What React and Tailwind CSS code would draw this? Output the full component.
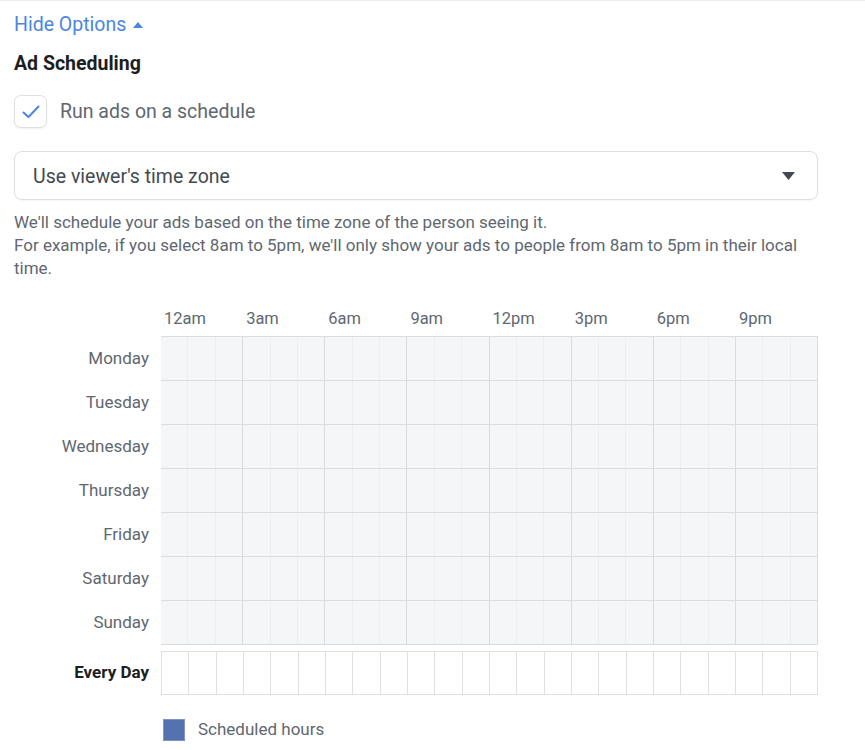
import React, { useState } from "react";

const days = ["Monday", "Tuesday", "Wednesday", "Thursday", "Friday", "Saturday", "Sunday"];
const hourLabels = ["12am", "3am", "6am", "9am", "12pm", "3pm", "6pm", "9pm"];
const hours = Array.from({ length: 24 }, (_, i) => i);

function ScheduleRow({ day }) {
  return (
    <div className="flex h-[44px]">
      <div className="w-[147px] shrink-0 pr-[12px] flex items-center justify-end text-[17px] text-[#606770]">
        {day}
      </div>
      <div className="grid grid-cols-24 w-[657px] border-b border-[#d9dbde]">
        {hours.map((h) => (
          <div
            key={h}
            className={
              h % 3 === 2
                ? "border-r border-[#d9dbde] bg-[#f5f6f7]"
                : "border-r border-[#eceef0] bg-[#f5f6f7]"
            }
          />
        ))}
      </div>
    </div>
  );
}

export default function App() {
  const [onSchedule, setOnSchedule] = useState(true);

  return (
    <div className="w-[865px] h-[750px] bg-white border-t border-[#ececec] px-[14px] pt-[12px] font-['Roboto',sans-serif] overflow-hidden">
      <button className="flex items-center gap-[7px] h-[24px] text-[19.5px] text-[#4b86e0]">
        Hide Options
        <svg width="10" height="6" viewBox="0 0 10 6">
          <path d="M0 6 L5 0 L10 6 Z" fill="#4b86e0" />
        </svg>
      </button>

      <h3 className="mt-[15px] h-[24px] leading-[24px] text-[19.5px] font-bold text-[#1c1e21]">Ad Scheduling</h3>

      <label className="mt-[19px] flex items-center gap-[13px] cursor-pointer">
        <span
          className="w-[33px] h-[33px] rounded-[7px] border border-[#dddfe2] bg-white flex items-center justify-center shadow-[0_1px_2px_rgba(0,0,0,0.06)]"
          onClick={() => setOnSchedule((v) => !v)}
        >
          {onSchedule && (
            <svg width="18" height="14" viewBox="0 0 18 14">
              <path d="M1.5 7.5 L6.5 12 L16.5 1.5" fill="none" stroke="#4b86e0" strokeWidth="2" strokeLinecap="round" strokeLinejoin="round" />
            </svg>
          )}
        </span>
        <span className="text-[19.5px] text-[#606770]">Run ads on a schedule</span>
      </label>

      <div className="mt-[23px] w-[804px] h-[49px] rounded-[8px] border border-[#dddfe2] flex items-center justify-between pl-[18px] pr-[22px] shadow-[0_1px_2px_rgba(0,0,0,0.04)]">
        <span className="text-[19.5px] text-[#444950] translate-y-[1px]">Use viewer's time zone</span>
        <svg width="13" height="8" viewBox="0 0 13 8">
          <path d="M0 0 L13 0 L6.5 8 Z" fill="#444950" />
        </svg>
      </div>

      <p className="mt-[11px] w-[804px] text-[17px] leading-[23px] text-[#606770]">
        We'll schedule your ads based on the time zone of the person seeing it.
        <br />
        For example, if you select 8am to 5pm, we'll only show your ads to people from 8am to 5pm in their local time.
      </p>

      <div className="mt-[29px] flex h-[20px]">
        <div className="w-[147px] shrink-0" />
        <div className="grid grid-cols-8 w-[657px]">
          {hourLabels.map((l) => (
            <div key={l} className="pl-[3px] text-[16.5px] leading-[20px] text-[#606770]">
              {l}
            </div>
          ))}
        </div>
      </div>

      <div className="mt-[7px]">
        <div className="flex">
          <div className="w-[147px] shrink-0" />
          <div className="w-[657px] h-0 border-t border-[#d9dbde]" />
        </div>
        {days.map((d) => (
          <ScheduleRow key={d} day={d} />
        ))}
      </div>

      <div className="mt-[6px] flex h-[44px]">
        <div className="w-[147px] shrink-0 pr-[12px] flex items-center justify-end text-[17px] font-bold text-[#1c1e21]">
          Every Day
        </div>
        <div className="grid grid-cols-24 w-[657px] border-y border-l border-[#dddfe2]">
          {hours.map((h) => (
            <div key={h} className="border-r border-[#dddfe2] bg-white" />
          ))}
        </div>
      </div>

      <div className="mt-[22px] flex items-center">
        <div className="w-[149px] shrink-0" />
        <div className="w-[22px] h-[22px] bg-[#5471b0] border border-[#7f93c4]" />
        <span className="ml-[13px] text-[17px] text-[#606770]">Scheduled hours</span>
      </div>
    </div>
  );
}
